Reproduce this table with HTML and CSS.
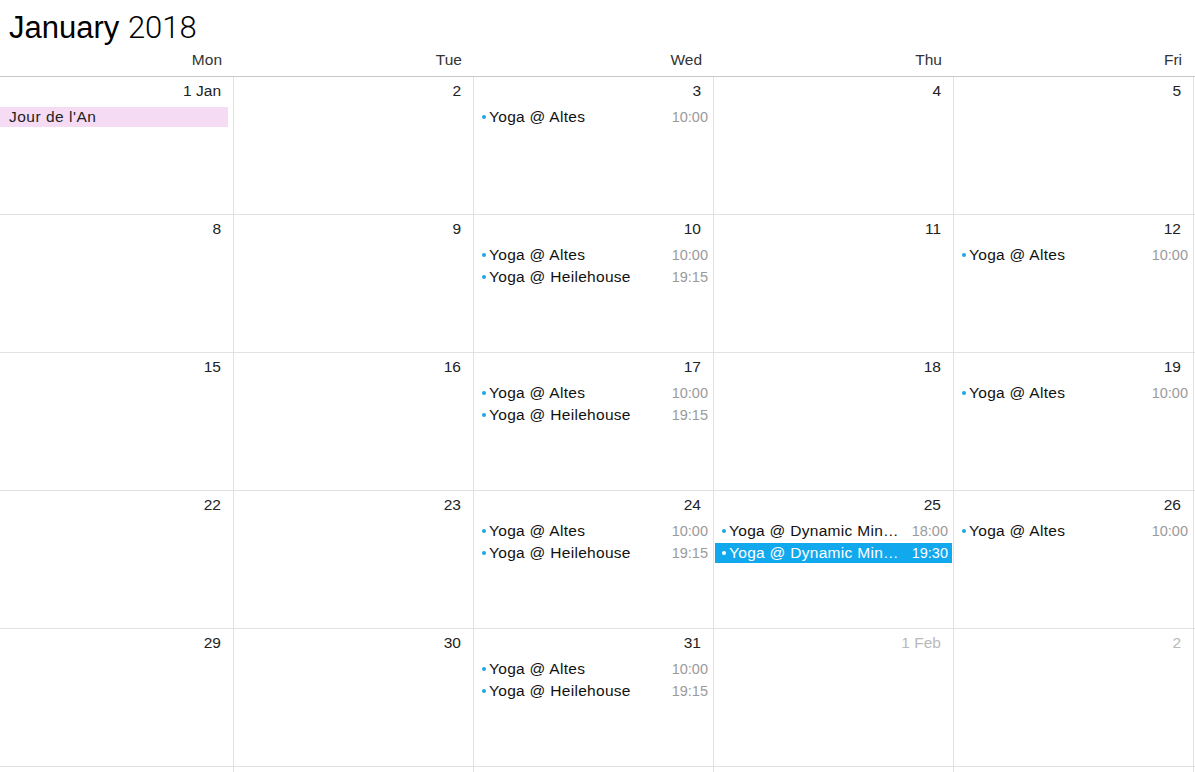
FILE: index.html
```html
<!DOCTYPE html>
<html>
<head>
<meta charset="utf-8">
<title>January 2018</title>
<link rel="stylesheet" href="styles.css">
</head>
<body>
<div class="title"><span class="month">January</span> <span class="year">2018</span></div>
<div class="days">
  <span>Mon</span><span>Tue</span><span>Wed</span><span>Thu</span><span>Fri</span>
</div>

<div class="row">
  <div class="cell"><div class="date">1 Jan</div><div class="holiday">Jour de l'An</div></div>
  <div class="cell"><div class="date">2</div></div>
  <div class="cell"><div class="date">3</div>
    <div class="ev"><i class="dot"></i><span class="name">Yoga @ Altes</span><span class="time">10:00</span></div>
  </div>
  <div class="cell"><div class="date">4</div></div>
  <div class="cell"><div class="date">5</div></div>
</div>

<div class="row">
  <div class="cell"><div class="date">8</div></div>
  <div class="cell"><div class="date">9</div></div>
  <div class="cell"><div class="date">10</div>
    <div class="ev"><i class="dot"></i><span class="name">Yoga @ Altes</span><span class="time">10:00</span></div>
    <div class="ev"><i class="dot"></i><span class="name">Yoga @ Heilehouse</span><span class="time">19:15</span></div>
  </div>
  <div class="cell"><div class="date">11</div></div>
  <div class="cell"><div class="date">12</div>
    <div class="ev"><i class="dot"></i><span class="name">Yoga @ Altes</span><span class="time">10:00</span></div>
  </div>
</div>

<div class="row">
  <div class="cell"><div class="date">15</div></div>
  <div class="cell"><div class="date">16</div></div>
  <div class="cell"><div class="date">17</div>
    <div class="ev"><i class="dot"></i><span class="name">Yoga @ Altes</span><span class="time">10:00</span></div>
    <div class="ev"><i class="dot"></i><span class="name">Yoga @ Heilehouse</span><span class="time">19:15</span></div>
  </div>
  <div class="cell"><div class="date">18</div></div>
  <div class="cell"><div class="date">19</div>
    <div class="ev"><i class="dot"></i><span class="name">Yoga @ Altes</span><span class="time">10:00</span></div>
  </div>
</div>

<div class="row">
  <div class="cell"><div class="date">22</div></div>
  <div class="cell"><div class="date">23</div></div>
  <div class="cell"><div class="date">24</div>
    <div class="ev"><i class="dot"></i><span class="name">Yoga @ Altes</span><span class="time">10:00</span></div>
    <div class="ev"><i class="dot"></i><span class="name">Yoga @ Heilehouse</span><span class="time">19:15</span></div>
  </div>
  <div class="cell"><div class="date">25</div>
    <div class="ev"><i class="dot"></i><span class="name">Yoga @ Dynamic Min…</span><span class="time">18:00</span></div>
    <div class="ev sel"><i class="dot"></i><span class="name">Yoga @ Dynamic Min…</span><span class="time">19:30</span></div>
  </div>
  <div class="cell"><div class="date">26</div>
    <div class="ev"><i class="dot"></i><span class="name">Yoga @ Altes</span><span class="time">10:00</span></div>
  </div>
</div>

<div class="row">
  <div class="cell"><div class="date">29</div></div>
  <div class="cell"><div class="date">30</div></div>
  <div class="cell"><div class="date">31</div>
    <div class="ev"><i class="dot"></i><span class="name">Yoga @ Altes</span><span class="time">10:00</span></div>
    <div class="ev"><i class="dot"></i><span class="name">Yoga @ Heilehouse</span><span class="time">19:15</span></div>
  </div>
  <div class="cell"><div class="date dim">1 Feb</div></div>
  <div class="cell"><div class="date dim">2</div></div>
</div>

<div class="row tail">
  <div class="cell"></div>
  <div class="cell"></div>
  <div class="cell"></div>
  <div class="cell"></div>
  <div class="cell"></div>
</div>
</body>
</html>
```

FILE: styles.css
```css
html, body {
  margin: 0;
  padding: 0;
  background: #fff;
}
body {
  font-family: "Liberation Sans", Arial, sans-serif;
  color: #222;
  height: 772px;
  overflow: hidden;
}
.title {
  box-sizing: border-box;
  height: 43px;
  padding: 12px 0 0 9px;
  font-size: 31px;
  line-height: 31px;
  color: #000;
  white-space: nowrap;
}
.title .year {
  font-family: Roboto, "Liberation Sans", sans-serif;
  font-weight: 300;
}
.days {
  box-sizing: border-box;
  display: grid;
  grid-template-columns: 234px repeat(4, 240px);
  height: 34px;
  border-bottom: 1px solid #c8c8c8;
}
.days span {
  text-align: right;
  padding: 8px 12px 0 0;
  font-size: 15.5px;
  line-height: 18px;
  color: #333;
}
.row {
  box-sizing: border-box;
  display: grid;
  grid-template-columns: 234px repeat(4, 240px);
  height: 138px;
  border-bottom: 1px solid #e2e2e2;
}
.row.tail {
  height: 5px;
  border-bottom: none;
}
.cell {
  display: flex;
  flex-direction: column;
  border-right: 1px solid #e2e2e2;
  min-width: 0;
}
.date {
  text-align: right;
  padding: 5px 12px 0 0;
  height: 18px;
  line-height: 18px;
  font-size: 15.5px;
  color: #222;
  margin-bottom: 6px;
}
.date.dim {
  color: #b9b9b9;
}
.holiday {
  height: 20px;
  margin: 1px 5px 1px 0;
  padding-left: 9px;
  background: #f5dcf4;
  line-height: 20px;
  font-size: 15.5px;
  letter-spacing: 0.5px;
  color: #222;
}
.ev {
  display: flex;
  align-items: baseline;
  height: 20px;
  line-height: 20px;
  margin: 1px;
  padding: 0 4px 0 7px;
  font-size: 15.5px;
  color: #111;
}
.dot {
  flex: none;
  align-self: center;
  width: 4px;
  height: 4px;
  border-radius: 50%;
  background: #1ea6e6;
  margin-right: 3px;
}
.name {
  flex: 1;
  min-width: 0;
  white-space: nowrap;
  overflow: hidden;
  text-overflow: ellipsis;
  letter-spacing: 0.3px;
}
.time {
  flex: none;
  margin-left: 8px;
  font-size: 14.5px;
  color: #9a9a9a;
}
.ev.sel {
  background: #12a8ee;
  color: #fff;
}
.ev.sel .dot {
  background: #fff;
}
.ev.sel .time {
  color: #fff;
}
```
